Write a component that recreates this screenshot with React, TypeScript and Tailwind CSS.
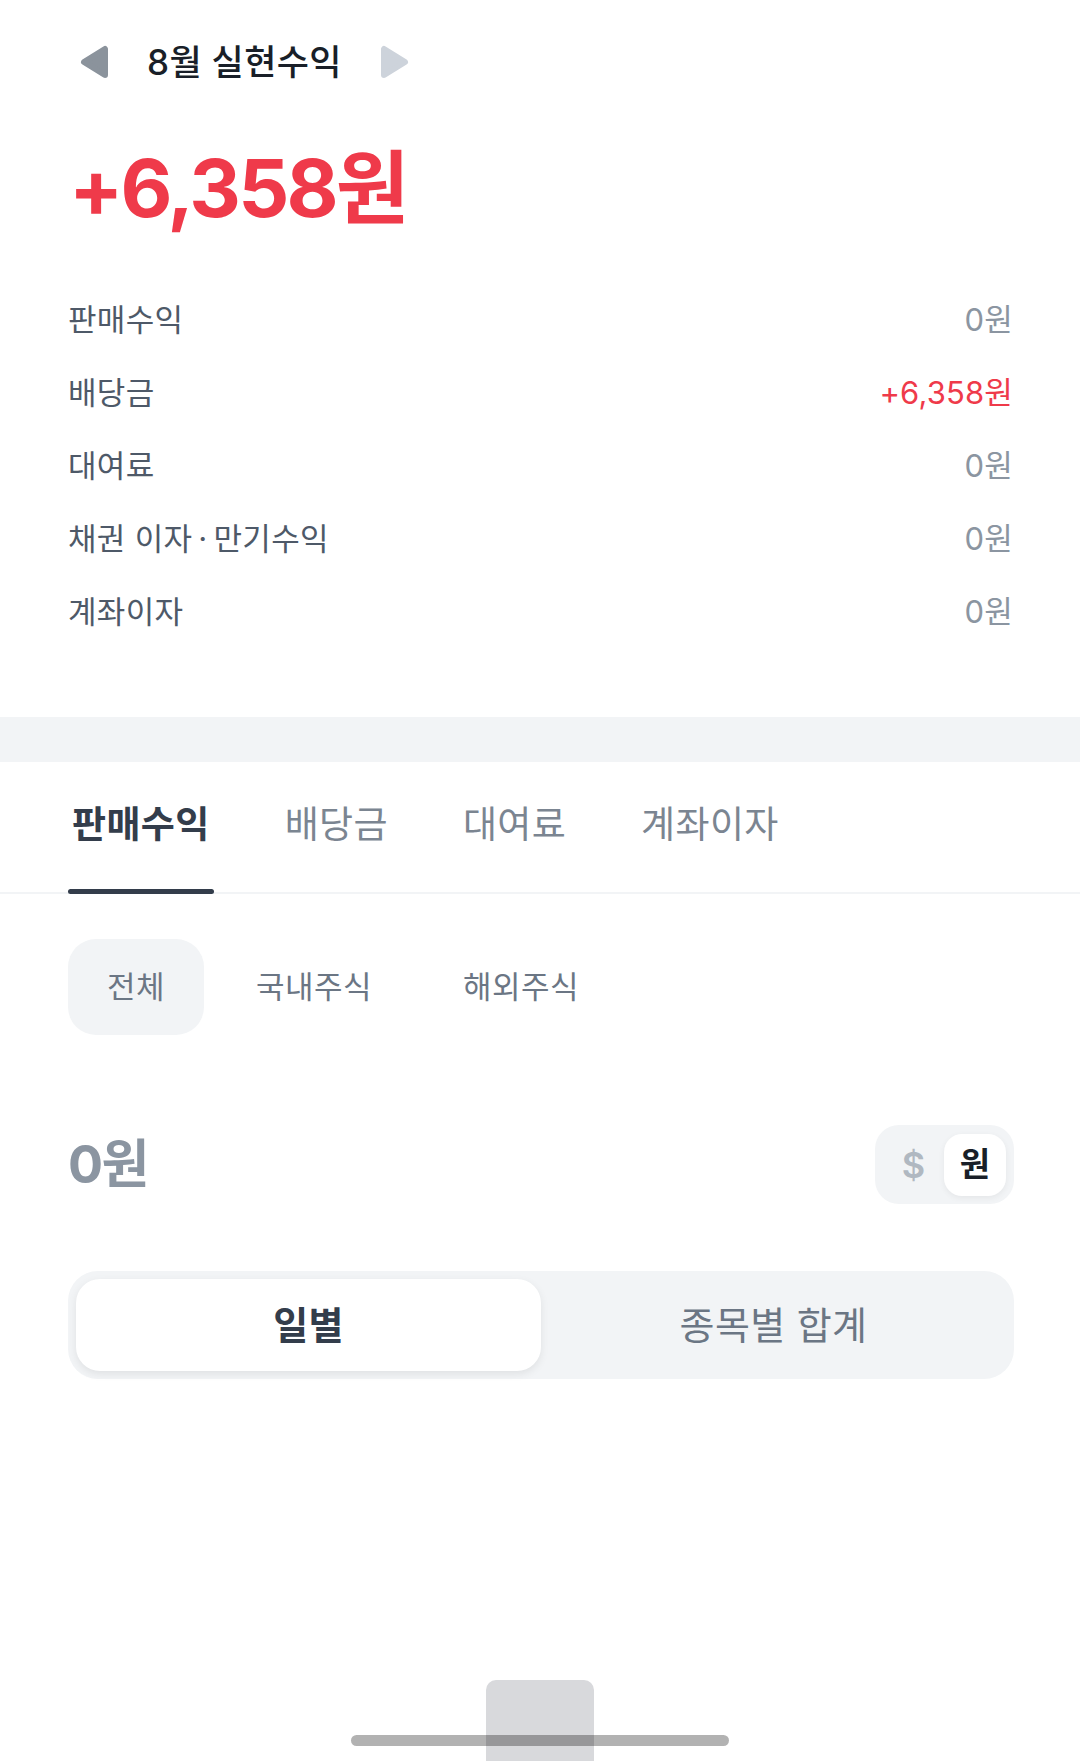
// ─── data ────────────────────────────────────────────────────────────────────

const SUMMARY = [
  { label: '판매수익', value: '0원', plus: false },
  { label: '배당금', value: '+6,358원', plus: true },
  { label: '대여료', value: '0원', plus: false },
  { label: '채권 이자\u2009·\u2009만기수익', value: '0원', plus: false },
  { label: '계좌이자', value: '0원', plus: false },
];

const TABS = ['판매수익', '배당금', '대여료', '계좌이자'];
const CHIPS = ['전체', '국내주식', '해외주식'];

// ─── bits ────────────────────────────────────────────────────────────────────

function Triangle({ dir, color }: { dir: 'left' | 'right'; color: string }) {
  const pts = dir === 'left' ? '25,4 25,30 4,17' : '5,4 5,30 26,17';
  return (
    <svg width="30" height="34" viewBox="0 0 30 34">
      <polygon points={pts} fill={color} stroke={color} strokeWidth="6" strokeLinejoin="round" />
    </svg>
  );
}

// ─── page ────────────────────────────────────────────────────────────────────

export default function App() {
  return (
    <div className="relative w-[1080px] h-[1761px] overflow-hidden bg-white font-[Inter,'Noto_Sans_CJK_KR',sans-serif]">
      {/* Month header */}
      <div className="flex h-[124px] items-center pl-[80px]">
        <Triangle dir="left" color="#8b939c" />
        <span className="ml-[37px] text-[35px] font-medium tracking-[0.01em] text-[#191f28]">8월 실현수익</span>
        <span className="ml-[37px] flex">
          <Triangle dir="right" color="#cdd3db" />
        </span>
      </div>

      {/* Total */}
      <div className="mt-[14px] flex h-[100px] items-center pl-[69px]">
        <span className="text-[80px] font-bold tracking-[-0.035em] text-[#ef3a4a]">+6,358원</span>
      </div>

      {/* Breakdown */}
      <div className="mt-[46px] flex flex-col pl-[68px] pr-[67px]">
        {SUMMARY.map(row => (
          <div key={row.label} className="flex h-[73px] items-center justify-between">
            <span className="text-[31px] tracking-[0.01em] text-[#4e5968]">{row.label}</span>
            <span className={`text-[31px] tracking-[0.005em] ${row.plus ? 'text-[#ef3a4a]' : 'text-[#8b95a1]'}`}>
              {row.value}
            </span>
          </div>
        ))}
      </div>

      {/* Divider band */}
      <div className="mt-[68px] h-[45px] bg-[#f2f4f6]" />

      {/* Tabs */}
      <div className="flex gap-[67px] border-b-2 border-[#f2f4f6] px-[68px]">
        {TABS.map((t, i) => (
          <div key={t} className="relative flex h-[130px] items-center px-[4px] pb-[4px]">
            <span
              className={`text-[37px] tracking-[0.01em] ${
                i === 0 ? 'font-bold text-[#333d4b]' : 'text-[#7b8591]'
              }`}
            >
              {t}
            </span>
            {i === 0 && <div className="absolute -bottom-[2px] left-0 right-0 h-[5px] rounded-full bg-[#333d4b]" />}
          </div>
        ))}
      </div>

      {/* Market chips */}
      <div className="mt-[45px] flex gap-[13px] px-[68px]">
        {CHIPS.map((c, i) => (
          <div
            key={c}
            className={`flex h-[96px] items-center rounded-[28px] px-[39px] text-[31px] tracking-[0.015em] text-[#6b7684] ${
              i === 0 ? 'bg-[#f2f4f6]' : ''
            }`}
          >
            {c}
          </div>
        ))}
      </div>

      {/* Amount + currency toggle */}
      <div className="mt-[90px] flex items-center justify-between pl-[68px] pr-[66px]">
        <span className="text-[52px] font-bold tracking-[-0.03em] text-[#8b95a1]">0원</span>
        <div className="flex h-[79px] w-[139px] items-center rounded-[24px] bg-[#f2f4f6] p-[8px]">
          <span className="w-[61px] text-center text-[36px] font-semibold text-[#b0b8c1]">$</span>
          <span className="flex h-[62px] w-[62px] items-center justify-center rounded-[18px] bg-white text-[33px] font-bold text-[#191f28] shadow-[0_2px_6px_rgba(0,0,0,0.06)]">
            원
          </span>
        </div>
      </div>

      {/* Segmented control */}
      <div className="ml-[68px] mr-[66px] mt-[67px] grid grid-cols-2 rounded-[30px] bg-[#f2f4f6] p-[8px]">
        <div className="flex h-[92px] items-center justify-center rounded-[24px] bg-white shadow-[0_3px_8px_rgba(0,0,0,0.08)]">
          <span className="text-[38px] font-bold tracking-[0.01em] text-[#333d4b]">일별</span>
        </div>
        <div className="flex h-[92px] items-center justify-center">
          <span className="text-[38px] tracking-[0.01em] text-[#6b7684]">종목별 합계</span>
        </div>
      </div>

      {/* Bottom overlays */}
      <div className="absolute left-[486px] top-[1680px] h-[81px] w-[108px] rounded-t-[10px] bg-[#d8d9dc]" />
      <div className="absolute left-[351px] top-[1735px] h-[11px] w-[378px] rounded-full bg-black/30" />
    </div>
  );
}
